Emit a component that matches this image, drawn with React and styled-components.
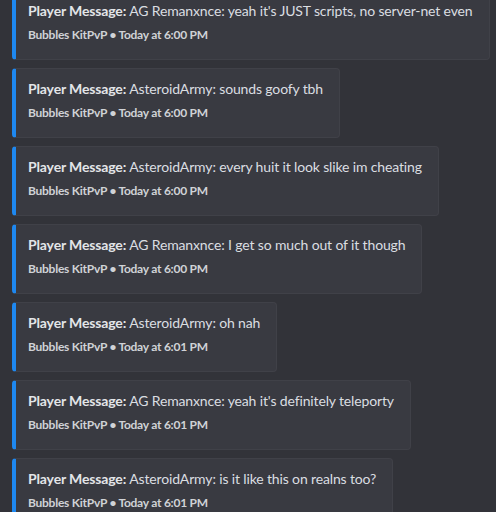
import React from "react";
import styled, { createGlobalStyle } from "styled-components";

const Global = createGlobalStyle`
  body {
    margin: 0;
    background: #323339;
    font-family: Lato, "Noto Sans", sans-serif;
    overflow: hidden;
  }
`;

const Feed = styled.div`
  display: flex;
  flex-direction: column;
  align-items: flex-start;
  gap: 8px;
  padding: 0 6px 0 12px;
  margin-top: -10px;
`;

const Embed = styled.div`
  box-sizing: border-box;
  height: 70px;
  max-width: 478px;
  background: #393a41;
  border: 1px solid #404148;
  border-left: 4px solid #1e88f0;
  border-radius: 4px;
  padding: 9px 16px 0 12px;
  display: flex;
  flex-direction: column;
  gap: 5px;
`;

const Title = styled.div`
  font-size: 14px;
  line-height: 22px;
  color: #dbdee1;
  white-space: nowrap;
  letter-spacing: -0.14px;
`;

const Label = styled.span`
  font-weight: 700;
  color: #e3e5e8;
`;

const Footer = styled.div`
  font-size: 12px;
  line-height: 16px;
  font-weight: 700;
  color: #d0d2d6;
  letter-spacing: -0.25px;
`;

const messages = [
  { who: "AG Remanxnce", text: "yeah it's JUST scripts, no server-net even", time: "6:00" },
  { who: "AsteroidArmy", text: "sounds goofy tbh", time: "6:00" },
  { who: "AsteroidArmy", text: "every huit it look slike im cheating", time: "6:00" },
  { who: "AG Remanxnce", text: "I get so much out of it though", time: "6:00" },
  { who: "AsteroidArmy", text: "oh nah", time: "6:01" },
  { who: "AG Remanxnce", text: "yeah it's definitely teleporty", time: "6:01" },
  { who: "AsteroidArmy", text: "is it like this on realns too?", time: "6:01" },
];

const App = () => {
  return (
    <>
      <Global />
      <Feed>
        {messages.map((m, i) => (
          <Embed key={i}>
            <Title>
              <Label>Player Message:</Label> {m.who}: {m.text}
            </Title>
            <Footer>Bubbles KitPvP • Today at {m.time} PM</Footer>
          </Embed>
        ))}
      </Feed>
    </>
  );
};

export default App;
